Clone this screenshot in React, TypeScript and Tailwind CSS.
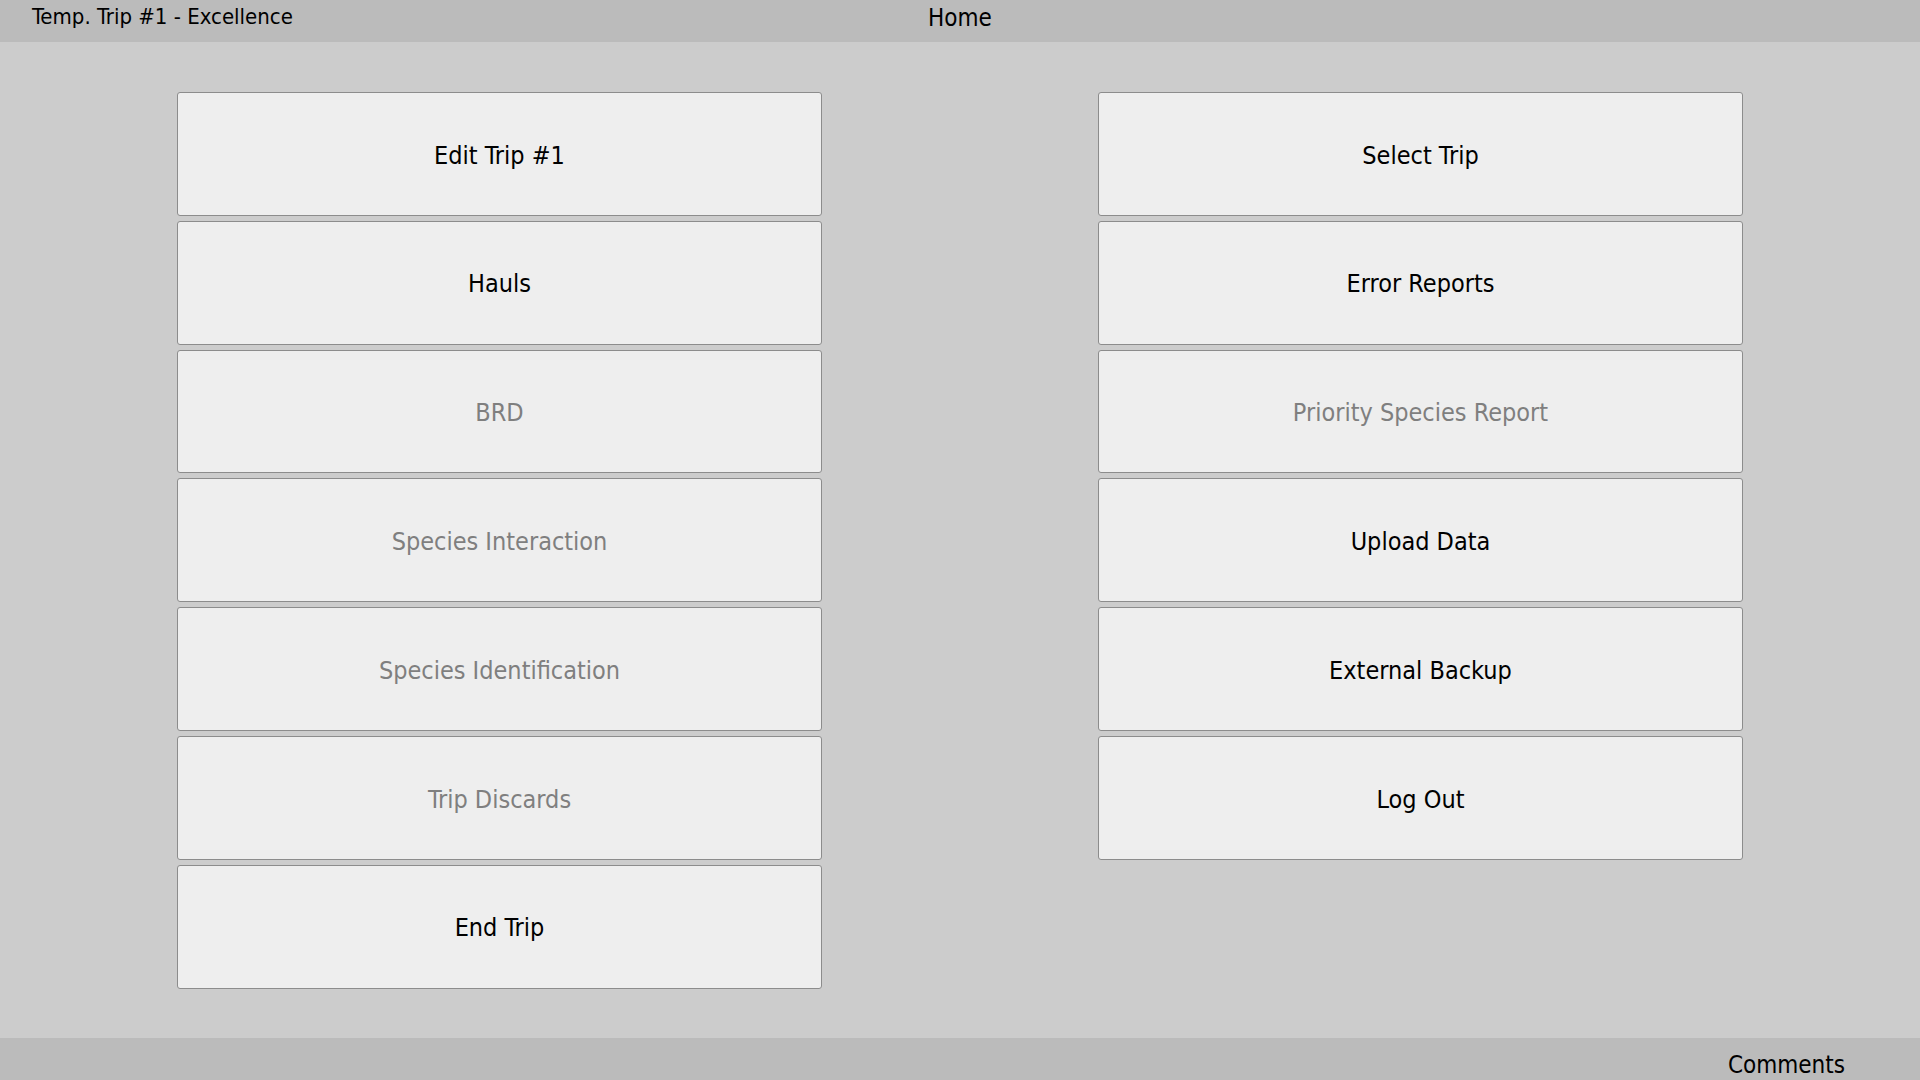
import React from 'react';

interface NavItem {
  label: string;
  enabled: boolean;
}

const leftItems: NavItem[] = [
  { label: 'Edit Trip #1', enabled: true },
  { label: 'Hauls', enabled: true },
  { label: 'BRD', enabled: false },
  { label: 'Species Interaction', enabled: false },
  { label: 'Species Identification', enabled: false },
  { label: 'Trip Discards', enabled: false },
  { label: 'End Trip', enabled: true },
];

const rightItems: NavItem[] = [
  { label: 'Select Trip', enabled: true },
  { label: 'Error Reports', enabled: true },
  { label: 'Priority Species Report', enabled: false },
  { label: 'Upload Data', enabled: true },
  { label: 'External Backup', enabled: true },
  { label: 'Log Out', enabled: true },
];

const NavButton: React.FC<{ item: NavItem }> = ({ item }) => (
  <button
    className={
      'h-[123.8px] w-full shrink-0 rounded-[3px] border-[1.5px] border-[#8c8c8c] bg-[#eeeeee] pt-[3px] text-[25px] ' +
      (item.enabled ? 'text-black' : 'text-[#7f7f7f]')
    }
  >
    {item.label}
  </button>
);

const App: React.FC = () => {
  return (
    <div className="flex h-[1080px] w-[1920px] flex-col bg-[#cccccc] font-['DejaVu_Sans_Condensed','DejaVu_Sans',sans-serif] text-black">
      {/* header */}
      <div className="relative flex h-[42px] shrink-0 items-start bg-[#bbbbbb]">
        <span className="pl-[32px] text-[22px] leading-[34px]">Temp. Trip #1 - Excellence</span>
        <span className="absolute left-1/2 top-0 -translate-x-1/2 text-[24px] leading-[36px]">Home</span>
      </div>

      {/* main grid */}
      <div className="flex flex-1 justify-between px-[177px] pt-[50px]">
        <div className="flex w-[645px] flex-col gap-[5px]">
          {leftItems.map(item => (
            <NavButton key={item.label} item={item} />
          ))}
        </div>
        <div className="flex w-[645px] flex-col gap-[5px]">
          {rightItems.map(item => (
            <NavButton key={item.label} item={item} />
          ))}
        </div>
      </div>

      {/* footer */}
      <div className="flex h-[42px] shrink-0 items-start justify-end bg-[#bbbbbb] pr-[75px] pt-[9px]">
        <span className="text-[24px]">Comments</span>
      </div>
    </div>
  );
};

export default App;
